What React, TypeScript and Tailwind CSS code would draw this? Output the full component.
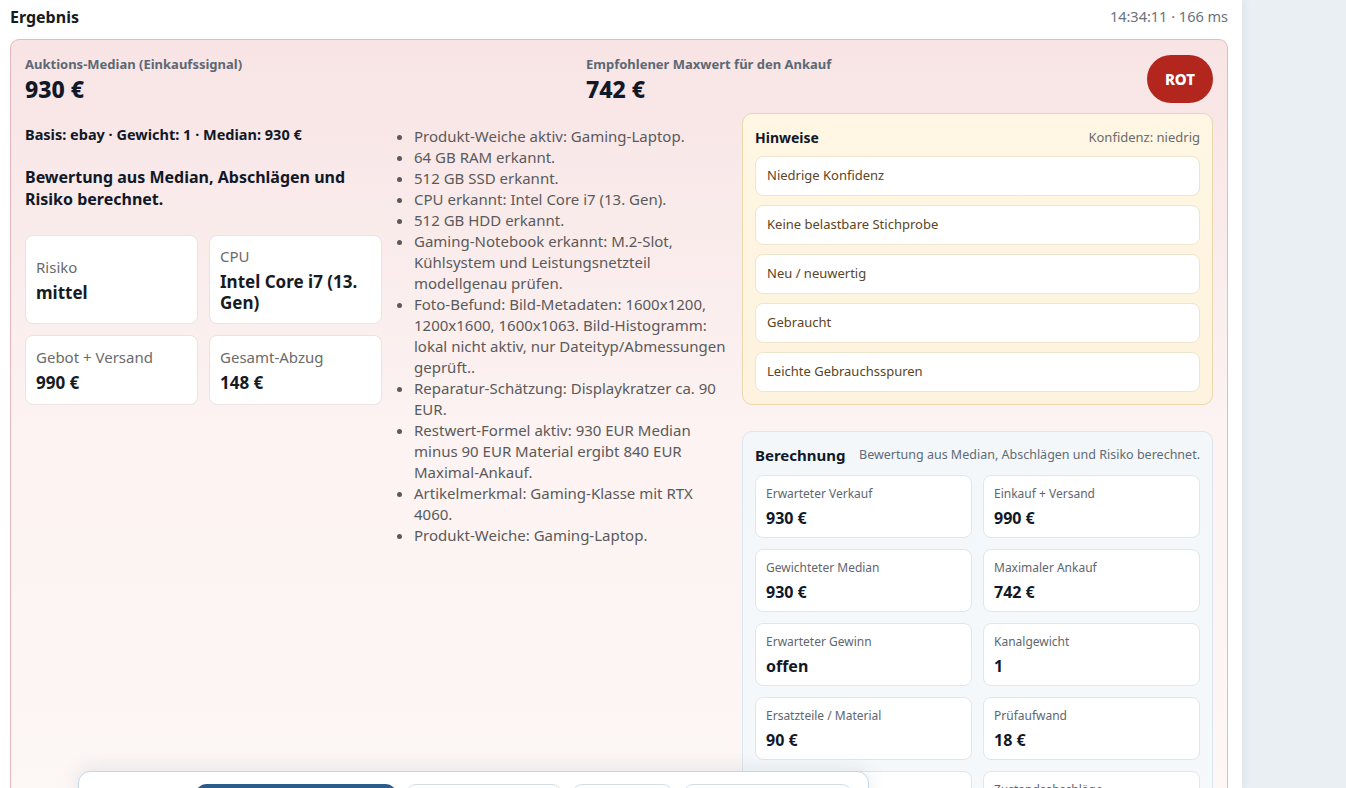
import React from "react";

const font = { fontFamily: '"Noto Sans", "Open Sans", Arial, sans-serif' };

const listItems = [
  "Produkt-Weiche aktiv: Gaming-Laptop.",
  "64 GB RAM erkannt.",
  "512 GB SSD erkannt.",
  "CPU erkannt: Intel Core i7 (13. Gen).",
  "512 GB HDD erkannt.",
  "Gaming-Notebook erkannt: M.2-Slot, Kühlsystem und Leistungsnetzteil modellgenau prüfen.",
  "Foto-Befund: Bild-Metadaten: 1600x1200, 1200x1600, 1600x1063. Bild-Histogramm: lokal nicht aktiv, nur Dateityp/Abmessungen geprüft..",
  "Reparatur-Schätzung: Displaykratzer ca. 90 EUR.",
  "Restwert-Formel aktiv: 930 EUR Median minus 90 EUR Material ergibt 840 EUR Maximal-Ankauf.",
  "Artikelmerkmal: Gaming-Klasse mit RTX 4060.",
  "Produkt-Weiche: Gaming-Laptop.",
];

const hinweise = [
  "Niedrige Konfidenz",
  "Keine belastbare Stichprobe",
  "Neu / neuwertig",
  "Gebraucht",
  "Leichte Gebrauchsspuren",
];

const calc: [string, string][] = [
  ["Erwarteter Verkauf", "930 €"],
  ["Einkauf + Versand", "990 €"],
  ["Gewichteter Median", "930 €"],
  ["Maximaler Ankauf", "742 €"],
  ["Erwarteter Gewinn", "offen"],
  ["Kanalgewicht", "1"],
  ["Ersatzteile / Material", "90 €"],
  ["Prüfaufwand", "18 €"],
  ["Zustandsabzug", "40 €"],
  ["Zustandsabschläge", "40 €"],
];

function StatCard({ label, value }: { label: string; value: string }) {
  return (
    <div className="flex min-h-[70px] flex-col justify-center rounded-lg border border-[#ebe3e3] bg-white px-[10px] py-[10px]">
      <div className="text-[15px] leading-[20px] text-[#6b6b6b]">{label}</div>
      <div className="mt-[5px] text-[17px] font-bold leading-[21px] text-[#161b22]">{value}</div>
    </div>
  );
}

export default function App() {
  return (
    <div className="flex h-[788px] w-[1346px] overflow-hidden bg-[#eaeff3]" style={font}>
      <div className="relative h-full w-[1242px] shrink-0 overflow-hidden bg-white shadow-[2px_0_8px_rgba(0,0,0,0.06)]">
        <div className="ml-[10px] mr-[14px] flex items-center justify-between pt-[6px]">
          <h2 className="text-[16px] font-bold leading-[22px] text-[#161b22]">Ergebnis</h2>
          <span className="text-[14.5px] text-[#6b7280]">14:34:11 · 166 ms</span>
        </div>

        <div className="ml-[10px] mr-[14px] mt-[11px] h-[800px] rounded-[9px] border border-[#e7b9bd] bg-gradient-to-b from-[#f8e4e5] via-[#fcf3f2] to-[#fdf7f6] px-[14px] pt-[15px]">
          {/* top row */}
          <div className="grid grid-cols-[1fr_1fr_auto] items-start gap-4">
            <div>
              <div className="text-[13px] font-bold leading-[19px] text-[#5c6873]">Auktions-Median (Einkaufssignal)</div>
              <div className="mt-[1px] text-[23px] font-extrabold leading-[28px] text-[#111827]">930 €</div>
            </div>
            <div>
              <div className="text-[13px] font-bold leading-[19px] text-[#5c6873]">Empfohlener Maxwert für den Ankauf</div>
              <div className="mt-[1px] text-[23px] font-extrabold leading-[28px] text-[#111827]">742 €</div>
            </div>
            <div className="flex h-[48px] w-[66px] items-center justify-center rounded-full bg-[#b3261e] text-[15px] font-extrabold text-white">
              ROT
            </div>
          </div>

          {/* body */}
          <div className="mt-[10px] grid grid-cols-[357px_minmax(0,1fr)_471px] items-start gap-4">
            <div className="pt-[11px]">
              <p className="text-[14.5px] font-bold leading-[20px] text-[#111827]">Basis: ebay · Gewicht: 1 · Median: 930 €</p>
              <p className="mt-[22px] text-[16px] font-bold leading-[22px] text-[#111827]">
                Bewertung aus Median, Abschlägen und Risiko berechnet.
              </p>
              <div className="mt-[25px] grid grid-cols-2 gap-[11px]">
                <StatCard label="Risiko" value="mittel" />
                <StatCard label="CPU" value="Intel Core i7 (13. Gen)" />
                <StatCard label="Gebot + Versand" value="990 €" />
                <StatCard label="Gesamt-Abzug" value="148 €" />
              </div>
            </div>

            <ul className="list-disc pl-4 pt-[13px] text-[15px] leading-[21px] text-[#5a5a5a] marker:text-[#5a5a5a]">
              {listItems.map((t) => (
                <li key={t}>{t}</li>
              ))}
            </ul>

            <div className="flex flex-col gap-[26px]">
              <div className="rounded-[10px] border border-[#ead7ab] bg-gradient-to-b from-[#fff6e3] to-[#fdf3df] px-[12px] pb-[12px] pt-[13px]">
                <div className="flex items-center justify-between">
                  <span className="text-[14px] font-bold text-[#111827]">Hinweise</span>
                  <span className="text-[13px] text-[#6b6b6b]">Konfidenz: niedrig</span>
                </div>
                <div className="mt-[8px] flex flex-col gap-[9px]">
                  {hinweise.map((h) => (
                    <div key={h} className="flex h-[40px] items-center rounded-lg border border-[#efe4cc] bg-white px-[11px] text-[13px] text-[#5b4525]">
                      {h}
                    </div>
                  ))}
                </div>
              </div>

              <div className="rounded-[10px] border border-[#dce6ee] bg-gradient-to-b from-[#f3f7fa] to-[#f6f9fb] px-[12px] pt-[12px]">
                <div className="flex items-center justify-between whitespace-nowrap">
                  <span className="text-[15px] font-bold text-[#111827]">Berechnung</span>
                  <span className="text-[12.5px] text-[#5f6b76]">Bewertung aus Median, Abschlägen und Risiko berechnet.</span>
                </div>
                <div className="mt-[8px] grid grid-cols-2 gap-[11px]">
                  {calc.map(([l, v]) => (
                    <div key={l} className="h-[63px] rounded-lg border border-[#dfe7ee] bg-white px-[10px] pt-[9px]">
                      <div className="text-[12px] leading-[18px] text-[#5f6670]">{l}</div>
                      <div className="mt-[5px] text-[16px] font-bold leading-[20px] text-[#111827]">{v}</div>
                    </div>
                  ))}
                </div>
              </div>
            </div>
          </div>
        </div>

        {/* floating toolbar */}
        <div className="absolute left-[78px] top-[771px] flex h-[60px] w-[791px] items-start gap-[10px] rounded-t-[12px] border border-[#c6d6e6] bg-white pl-[117px] pt-[12px] shadow-[0_-4px_18px_rgba(60,80,110,0.10)]">
          <div className="h-[36px] w-[200px] rounded-[10px] bg-[#2a5d8c]" />
          <div className="h-[36px] w-[156px] rounded-[10px] border border-[#d4dde6] bg-white" />
          <div className="h-[36px] w-[101px] rounded-[10px] border border-[#d4dde6] bg-white" />
          <div className="h-[36px] w-[169px] rounded-[10px] border border-[#d4dde6] bg-white" />
        </div>
      </div>
    </div>
  );
}
